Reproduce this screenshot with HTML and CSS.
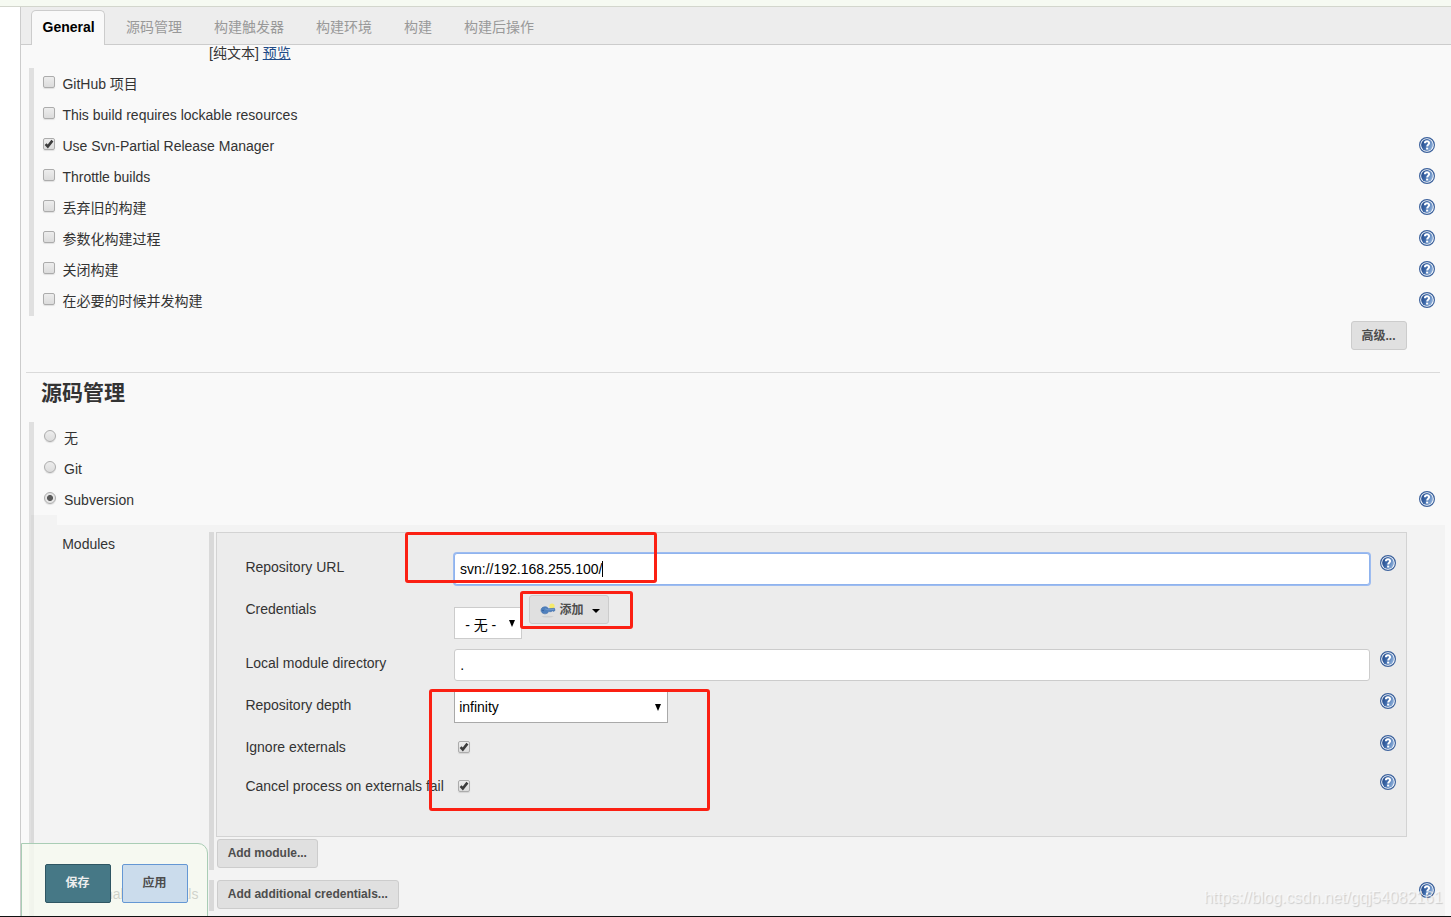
FILE: index.html
```html
<!DOCTYPE html>
<html lang="zh-CN">

<head>
    <meta charset="UTF-8">
    <title>Config</title>
    <link rel="stylesheet" href="styles.css">
</head>

<body>
    <svg width="0" height="0" class="defs">
        <defs>
            <linearGradient id="blue" x1="0" y1="0" x2="1" y2="0.4">
                <stop offset="0" stop-color="#1f4585" />
                <stop offset="0.5" stop-color="#3d68a8" />
                <stop offset="1" stop-color="#86a9d6" />
            </linearGradient>
            <symbol id="help" viewBox="0 0 16 16">
                <circle cx="8" cy="8" r="7.4" fill="#fff" stroke="#3b619c" stroke-width="1.2" />
                <circle cx="8" cy="8" r="5.9" fill="url(#blue)" />
                <path d="M5.9 6.3C5.9 3.6 10.2 3.7 10.1 6.2C10 7.6 8.2 7.8 8.2 9.6" fill="none" stroke="#fff" stroke-width="2" />
                <rect x="7.1" y="10.6" width="2.1" height="1.9" fill="#fff" />
            </symbol>
            <symbol id="tick" viewBox="0 0 12 12">
                <path d="M2.6 6.2L4.8 8.6L9.4 2.6" fill="none" stroke="#3c3c3c" stroke-width="2.6" />
            </symbol>
        </defs>
    </svg>

    <div class="topbar"></div>
    <div class="main">
        <div class="tabs">
            <div class="tab active">General</div>
            <div class="tab">源码管理</div>
            <div class="tab">构建触发器</div>
            <div class="tab">构建环境</div>
            <div class="tab">构建</div>
            <div class="tab">构建后操作</div>
        </div>

        <div class="preview">[纯文本] <a href="#">预览</a></div>

        <div class="group">
            <div class="row"><span class="check"></span><label>GitHub 项目</label></div>
            <div class="row"><span class="check"></span><label>This build requires lockable resources</label></div>
            <div class="row"><span class="check"><svg><use href="#tick" /></svg></span><label>Use Svn-Partial Release Manager</label><svg class="help"><use href="#help" /></svg></div>
            <div class="row"><span class="check"></span><label>Throttle builds</label><svg class="help"><use href="#help" /></svg></div>
            <div class="row"><span class="check"></span><label>丢弃旧的构建</label><svg class="help"><use href="#help" /></svg></div>
            <div class="row"><span class="check"></span><label>参数化构建过程</label><svg class="help"><use href="#help" /></svg></div>
            <div class="row"><span class="check"></span><label>关闭构建</label><svg class="help"><use href="#help" /></svg></div>
            <div class="row"><span class="check"></span><label>在必要的时候并发构建</label><svg class="help"><use href="#help" /></svg></div>
        </div>

        <div class="advanced"><button class="btn">高级...</button></div>

        <h2>源码管理</h2>

        <div class="group scm">
            <div class="row"><span class="radio"></span><label>无</label></div>
            <div class="row"><span class="radio"></span><label>Git</label></div>
            <div class="row"><span class="radio on"></span><label>Subversion</label><svg class="help"><use href="#help" /></svg></div>

            <div class="shade-top"></div>
            <div class="shade">
                <div class="section">
                    <div class="name">Modules</div>
                    <div class="repeated modules">
                        <div class="panel">
                            <div class="field url">
                                <label>Repository URL</label>
                                <div class="text focus">svn://192.168.255.100/<i class="caret"></i></div>
                                <svg class="help"><use href="#help" /></svg>
                            </div>
                            <div class="field cred">
                                <label>Credentials</label>
                                <div class="cred-line">
                                    <div class="select small"><span>- 无 -</span><svg class="arrow" viewBox="0 0 6 7"><path d="M0 0H6L3 7Z" /></svg></div>
                                    <button class="btn add">
                                        <svg class="key" viewBox="0 0 16 16">
                                            <ellipse cx="7.5" cy="14.6" rx="6" ry="0.8" fill="#cfcfcf" />
                                            <circle cx="12" cy="4" r="2.6" fill="#f5ea6b" />
                                            <path d="M1 8.2C1 4.4 7 3.6 8.3 6.7L14.5 6.3L15 8.5L13.4 9.4L12.3 8.8L11.2 9.7L8.5 9.6C7.6 13 1 12.4 1 8.2Z" fill="#4f80bd" stroke="#3f6daa" stroke-width="0.6" />
                                            <path d="M5 6.8L8 7.8L14 7.4" fill="none" stroke="#7ba3d4" stroke-width="0.7" />
                                            <circle cx="3" cy="8.5" r="0.7" fill="#2c548e" />
                                        </svg>
                                        <span>添加</span>
                                        <svg class="down" viewBox="0 0 8 4"><path d="M0 0H8L4 4Z" /></svg>
                                    </button>
                                </div>
                            </div>
                            <div class="field dir">
                                <label>Local module directory</label>
                                <div class="text">.</div>
                                <svg class="help"><use href="#help" /></svg>
                            </div>
                            <div class="field depth">
                                <label>Repository depth</label>
                                <div class="select wide"><span>infinity</span><svg class="arrow" viewBox="0 0 6 7"><path d="M0 0H6L3 7Z" /></svg></div>
                                <svg class="help"><use href="#help" /></svg>
                            </div>
                            <div class="field ignore">
                                <label>Ignore externals</label>
                                <span class="check"><svg><use href="#tick" /></svg></span>
                                <svg class="help"><use href="#help" /></svg>
                            </div>
                            <div class="field cancel">
                                <label>Cancel process on externals fail</label>
                                <span class="check"><svg><use href="#tick" /></svg></span>
                                <svg class="help"><use href="#help" /></svg>
                            </div>
                        </div>
                        <button class="btn">Add module...</button>
                    </div>
                </div>
                <div class="section extra">
                    <div class="name">Additional Credentials</div>
                    <div class="repeated">
                        <button class="btn">Add additional credentials...</button>
                    </div>
                    <svg class="help"><use href="#help" /></svg>
                </div>
            </div>
        </div>
    </div>

    <div class="save-bar">
        <button class="save">保存</button>
        <button class="apply">应用</button>
    </div>

    <div class="mark mark-url"></div>
    <div class="mark mark-add"></div>
    <div class="mark mark-depth"></div>

    <div class="watermark">https://blog.csdn.net/gqj54082161</div>
    <div class="bottom-line"></div>
</body>

</html>
```

FILE: styles.css
```css
* {
    box-sizing: border-box;
}

body {
    margin: 0;
    position: relative;
    width: 1451px;
    height: 917px;
    overflow: hidden;
    background-color: #fff;
    color: #333;
    font-family: "Liberation Sans", "Noto Sans CJK SC", sans-serif;
    font-size: 14px;
    line-height: 20px;
}

svg {
    display: block;
}

.defs {
    position: absolute;
}

button {
    font-family: inherit;
    margin: 0;
}

.topbar {
    height: 7px;
    background-color: #f6faf2;
    border-bottom: 1px solid #d3d6cd;
}

.main {
    margin-left: 20px;
    height: 910px;
    overflow: hidden;
    border-left: 1px solid #ccc;
    background-color: #f9f9f9;
}

/* tabs */
.tabs {
    display: flex;
    height: 38px;
    padding: 3px 0 0 10px;
    background-color: #ededed;
    border-bottom: 1px solid #ccc;
}

.tab {
    height: 35px;
    margin-right: 10px;
    padding: 0 11px;
    line-height: 34px;
    color: #999;
    white-space: nowrap;
}

.tab.active {
    width: 74px;
    padding: 0 10.5px;
    line-height: 32px;
    font-weight: bold;
    color: #000;
    background-color: #f9f9f9;
    border: 1px solid #ccc;
    border-bottom: none;
    border-radius: 5px 5px 0 0;
}

.preview {
    height: 23px;
    padding-left: 188px;
    line-height: 17px;
}

.preview a {
    color: #204a87;
}

/* option rows */
.group {
    margin-left: 8px;
    border-left: 5px solid #e0e0e0;
}

.row {
    display: flex;
    height: 31px;
    padding: 7px 16px 0 9px;
}

.row label {
    flex: 1;
    margin-left: 7.4px;
    line-height: 19px;
}

.row .radio + label {
    margin-left: 8px;
}

.help {
    width: 16px;
    height: 16px;
}

.check,
.radio {
    width: 12px;
    height: 12px;
    border: 1px solid #acacac;
    border-radius: 2px;
    background: linear-gradient(#ededed, #dcdcdc);
    box-shadow: 0 1px 1px rgba(0, 0, 0, 0.1);
}

.row .check,
.row .radio {
    margin-top: 1px;
}

.check svg {
    width: 12px;
    height: 12px;
    margin: -1px;
}

.radio {
    border-radius: 50%;
    margin-left: 1px;
}

.radio.on {
    background: radial-gradient(circle, #5a5a5a 0, #5a5a5a 2.6px, #e6e6e6 3.4px);
}

.btn {
    height: 29px;
    padding: 0 10px 1px 9.6px;
    border: 1px solid #ccc;
    border-radius: 3px;
    background-color: #e0e0e0;
    color: #4d4d4d;
    font-size: 12px;
    font-weight: bold;
    line-height: 26px;
    white-space: nowrap;
}

.advanced {
    display: flex;
    justify-content: flex-end;
    height: 57px;
    margin: 0 11px 0 5px;
    padding: 5px 33px 0 0;
    border-bottom: 1px solid #dadada;
}

.advanced .btn {
    width: 56px;
    padding: 0 1px 0 0;
}

h2 {
    height: 49px;
    margin: 0;
    padding-left: 20px;
    font-size: 21px;
    line-height: 40px;
}

/* nested svn settings */
.shade-top {
    width: 26px;
    height: 10px;
    margin-left: -3px;
    background-color: rgba(0, 0, 0, 0.025);
}

.shade {
    height: 400px;
    margin: 0 6px 0 -3px;
    padding-top: 7px;
    background-color: rgba(0, 0, 0, 0.025);
}

.section {
    display: flex;
    padding-right: 10px;
}

.name {
    width: 178px;
    padding: 2px 0 0 31.2px;
    white-space: nowrap;
}

.repeated {
    border-left: 5px solid #d9d9d9;
    padding-left: 3px;
}

.modules {
    height: 338px;
    padding-left: 2px;
}

.modules > .btn {
    width: 101px;
    margin: 2px 0 0 1px;
}

.extra .btn {
    width: 182px;
}

.panel {
    width: 1191px;
    height: 305px;
    padding-top: 20px;
    border: 1px solid #d3d3d3;
    background-color: #ececec;
}

.field {
    display: grid;
    grid-template-columns: 208.6px 916px 16px;
    padding-left: 28.4px;
    align-items: start;
}

.field > label {
    padding-top: 4px;
    white-space: nowrap;
}

.field .help {
    margin-left: 10px;
    margin-top: 2px;
}

.text {
    display: flex;
    align-items: center;
    height: 32px;
    padding: 0 0 0 5.2px;
    border: 1px solid #ccc;
    border-radius: 3px;
    background-color: #fff;
    color: #000;
}

.focus {
    border-color: #8fb3ee;
    box-shadow: 0 0 0 1px #9dbcf0;
    padding-left: 5px;
}

.caret {
    width: 1px;
    height: 16px;
    background-color: #000;
}

.select {
    display: flex;
    align-items: center;
    justify-content: space-between;
    height: 32px;
    border: 1px solid #ccc;
    background-color: #fff;
    color: #000;
}

.arrow {
    width: 6px;
    height: 7px;
}

.small {
    width: 68px;
    padding: 3px 6px 0 10.2px;
}

.small .arrow {
    margin-top: -3px;
}

.wide {
    width: 214px;
    padding: 0 6px 0 4.2px;
    border-color: #a9a9a9;
}

.url,
.dir,
.depth {
    height: 42px;
}

.cred {
    height: 54px;
}

.cred-line {
    display: flex;
}

.cred-line .select {
    margin-top: 12px;
}

.add {
    display: flex;
    align-items: center;
    width: 80px;
    margin-left: 7px;
    padding: 0 0 0 10px;
}

.key {
    width: 16px;
    height: 16px;
    margin: 0 3.5px 0 0;
}

.down {
    width: 8px;
    height: 4px;
    margin: 2px 0 0 8.5px;
    fill: #000;
}

.ignore {
    height: 39px;
}

.field .check {
    margin: 8px 0 0 4px;
}

.extra {
    padding-top: 10px;
}

.extra .name {
    padding-top: 4px;
}

.extra .repeated {
    height: 31px;
}

.extra .help {
    margin: 2px 0 0 auto;
}

/* floating parts */
.save-bar {
    position: absolute;
    left: 21px;
    top: 843px;
    display: flex;
    gap: 11px;
    width: 187px;
    height: 80px;
    padding: 20px 0 0 23px;
    border: 1px solid #a9cdb5;
    border-radius: 0 10px 0 0;
    background-color: rgba(246, 250, 240, 0.8);
}

.save-bar button {
    width: 66px;
    height: 39px;
    padding: 0 1px 4px 0;
    border-radius: 2px;
    font-size: 12px;
    font-weight: bold;
}

.save-bar .save {
    border: 1px solid #2f5663;
    background-color: #467886;
    color: #eee;
}

.save-bar .apply {
    border: 1px solid #6497d4;
    background-color: #cbdcec;
    color: #4d4d4d;
}

.mark {
    position: absolute;
    border: 3px solid #fb2013;
    border-radius: 3px;
}

.mark-url {
    left: 405px;
    top: 532px;
    width: 252px;
    height: 51px;
}

.mark-add {
    left: 520px;
    top: 591px;
    width: 113px;
    height: 38px;
}

.mark-depth {
    left: 429px;
    top: 689px;
    width: 281px;
    height: 122px;
}

.watermark {
    position: absolute;
    left: 1204px;
    top: 888px;
    font-size: 15.9px;
    color: rgba(255, 255, 255, 0.6);
    text-shadow: 1px 1px 1px rgba(0, 0, 0, 0.16);
}

.bottom-line {
    position: absolute;
    left: 0;
    top: 916px;
    width: 100%;
    height: 1px;
    background-color: #111;
}
```
